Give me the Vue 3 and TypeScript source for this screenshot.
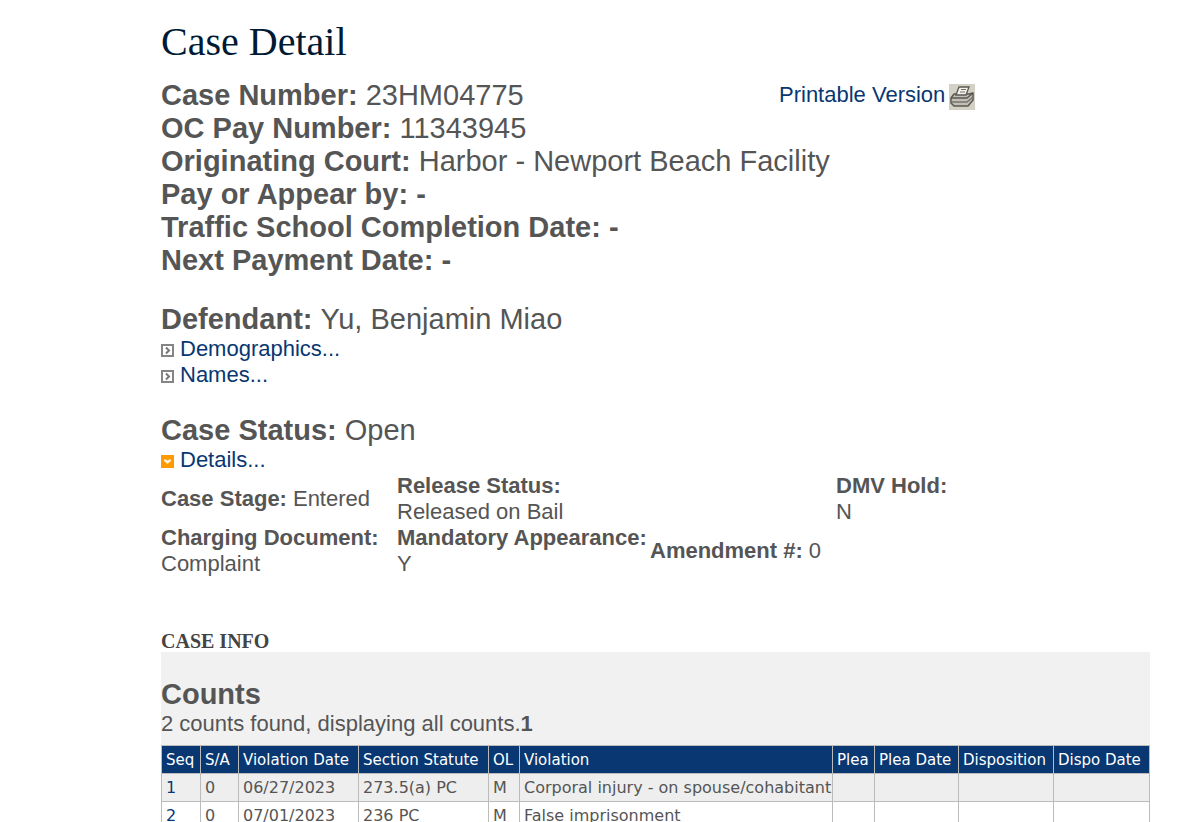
<script setup lang="ts">
interface Field {
  label: string
  value: string
}

interface Count {
  seq: number
  amended: number
  date: string
  statute: string
  level: string
  violation: string
}

const summary: Field[] = [
  { label: 'Case Number:', value: '23HM04775' },
  { label: 'OC Pay Number:', value: '11343945' },
  { label: 'Originating Court:', value: 'Harbor - Newport Beach Facility' },
  { label: 'Pay or Appear by:', value: '-' },
  { label: 'Traffic School Completion Date:', value: '-' },
  { label: 'Next Payment Date:', value: '-' },
]

const columns: { label: string; key: string }[] = [
  { label: 'Seq', key: 'seq' },
  { label: 'S/A', key: 'sa' },
  { label: 'Violation Date', key: 'date' },
  { label: 'Section Statute', key: 'statute' },
  { label: 'OL', key: 'ol' },
  { label: 'Violation', key: 'violation' },
  { label: 'Plea', key: 'plea' },
  { label: 'Plea Date', key: 'plea-date' },
  { label: 'Disposition', key: 'disposition' },
  { label: 'Dispo Date', key: 'dispo-date' },
]

const counts: Count[] = [
  { seq: 1, amended: 0, date: '06/27/2023', statute: '273.5(a) PC', level: 'M', violation: 'Corporal injury - on spouse/cohabitant' },
  { seq: 2, amended: 0, date: '07/01/2023', statute: '236 PC', level: 'M', violation: 'False imprisonment' },
]
</script>

<template>
  <main class="page">
    <h1>Case Detail</h1>

    <section class="summary">
      <h2 v-for="(field, i) in summary" :key="field.label" :class="{ lead: i === 0 }">
        {{ field.label }} <b v-if="field.value === '-'">-</b><span v-else>{{ field.value }}</span>
      </h2>
      <a class="print" href="#">
        Printable Version
        <svg width="26" height="26" viewBox="0 0 26 26" aria-hidden="true">
          <rect width="26" height="26" fill="#d3d0c5" />
          <path d="M2 14 5 10H20L24 9V16L19 22H5L2 19Z" fill="#c0beb5" stroke="#5a5853" stroke-width="1.5" stroke-linejoin="round" />
          <path d="M2 14H18L24 9" fill="none" stroke="#5a5853" stroke-width="1.5" />
          <path d="M3 18H18L24 13" fill="none" stroke="#77746d" stroke-width="1.5" />
          <path d="M7 11 10 3H20L17 11Z" fill="#f3f1ea" stroke="#5a5853" stroke-width="1.3" />
          <path d="M12 5.5H17M11 8H16" stroke="#77746d" stroke-width="1.2" />
        </svg>
      </a>
    </section>

    <section class="block">
      <h2>Defendant: <span>Yu, Benjamin Miao</span></h2>
      <a v-for="name in ['Demographics...', 'Names...']" :key="name" class="toggle" href="#">
        <svg width="13" height="13" viewBox="0 0 13 13" aria-hidden="true">
          <rect x="1" y="1" width="11" height="11" fill="#fff" stroke="#858585" stroke-width="2" />
          <path d="M5 3.5 8 6.5 5 9.5" fill="none" stroke="#777" stroke-width="2" />
        </svg>
        {{ name }}
      </a>
    </section>

    <section class="block">
      <h2>Case Status: <span>Open</span></h2>
      <a class="toggle" href="#">
        <svg width="13" height="13" viewBox="0 0 13 13" aria-hidden="true">
          <rect width="13" height="13" fill="#ff9900" />
          <path d="M3 4.5H5L6.5 5.5 8 4.5H10V6L6.5 9 3 6Z" fill="#fff0d6" />
        </svg>
        Details...
      </a>
      <dl class="details">
        <div class="inline"><dt>Case Stage:</dt><dd>Entered</dd></div>
        <div class="wide"><dt>Release Status:</dt><dd>Released on Bail</dd></div>
        <div><dt>DMV Hold:</dt><dd>N</dd></div>
        <div><dt>Charging Document:</dt><dd>Complaint</dd></div>
        <div><dt>Mandatory Appearance:</dt><dd>Y</dd></div>
        <div class="inline"><dt>Amendment #:</dt><dd>0</dd></div>
      </dl>
    </section>

    <h3>CASE INFO</h3>
    <section class="panel">
      <h2>Counts</h2>
      <p>2 counts found, displaying all counts.<b>1</b></p>
      <table>
        <colgroup>
          <col v-for="col in columns" :key="col.key" :class="'c-' + col.key" />
        </colgroup>
        <thead>
          <tr>
            <th v-for="col in columns" :key="col.key" scope="col">{{ col.label }}</th>
          </tr>
        </thead>
        <tbody>
          <tr v-for="count in counts" :key="count.seq">
            <td class="seq">{{ count.seq }}</td>
            <td>{{ count.amended }}</td>
            <td>{{ count.date }}</td>
            <td>{{ count.statute }}</td>
            <td>{{ count.level }}</td>
            <td>{{ count.violation }}</td>
            <td></td>
            <td></td>
            <td></td>
            <td></td>
          </tr>
        </tbody>
      </table>
    </section>
  </main>
</template>

<style>
body {
  margin: 0;
  background: #fff;
}
</style>

<style scoped>
.page {
  padding: 19px 46px 0 161px;
  color: #555;
  font: 22px/26px "Liberation Sans", Arial, sans-serif;
}

h1 {
  margin: 0 0 14px;
  color: #001a35;
  font: 40px/46px "Liberation Serif", "Times New Roman", serif;
}

h2 {
  margin: 0;
  font-size: 29px;
  line-height: 33px;
  white-space: nowrap;
}

h2 span {
  font-weight: 400;
}

a {
  color: #083772;
  text-decoration: none;
}

.summary {
  display: grid;
  grid-template-columns: 618px 1fr;
}

.summary h2 {
  grid-column: 1 / -1;
}

.summary h2.lead {
  grid-column: 1;
}

.print {
  display: flex;
  grid-area: 1 / 2;
  align-items: center;
  gap: 4px;
  height: 31px;
  white-space: nowrap;
}

.print svg {
  margin-top: 4px;
}

.block {
  margin-top: 26px;
}

.toggle {
  display: flex;
  align-items: center;
  gap: 6px;
  width: max-content;
}

.toggle svg {
  margin-top: 3px;
}

.details {
  display: grid;
  grid-template-columns: 236px 253px 186px 1fr;
  align-items: center;
  margin: 0;
}

.details .wide {
  grid-column: span 2;
}

.details .inline {
  display: flex;
  gap: 6px;
}

dt {
  font-weight: 700;
}

dd {
  margin: 0;
}

h3 {
  margin: 53px 0 0;
  color: #444;
  font: bold 20px/22px "Liberation Serif", "Times New Roman", serif;
}

.panel {
  padding-top: 26px;
  background: #f1f1f1;
}

.panel p {
  margin: 0 0 8px;
}

table {
  width: 100%;
  border-collapse: collapse;
  font: 15px/19px Verdana, "DejaVu Sans", sans-serif;
}

th,
td {
  height: 19px;
  border: 1px solid #bbb;
  text-align: left;
  white-space: nowrap;
}

th {
  padding: 5px 0 3px 4px;
  background: #083772;
  color: #fff;
  font-weight: 400;
}

td {
  padding: 4px 0 4px 4px;
  background: #fff;
  font-size: 16px;
}

tbody tr:nth-child(odd) td {
  background: #eee;
}

td.seq {
  color: #083772;
}

.c-seq { width: 39px; }
.c-sa { width: 38px; }
.c-date { width: 120px; }
.c-statute { width: 130px; }
.c-ol { width: 31px; }
.c-plea { width: 42px; }
.c-plea-date { width: 84px; }
.c-disposition { width: 95px; }
.c-dispo-date { width: 96px; }
</style>
